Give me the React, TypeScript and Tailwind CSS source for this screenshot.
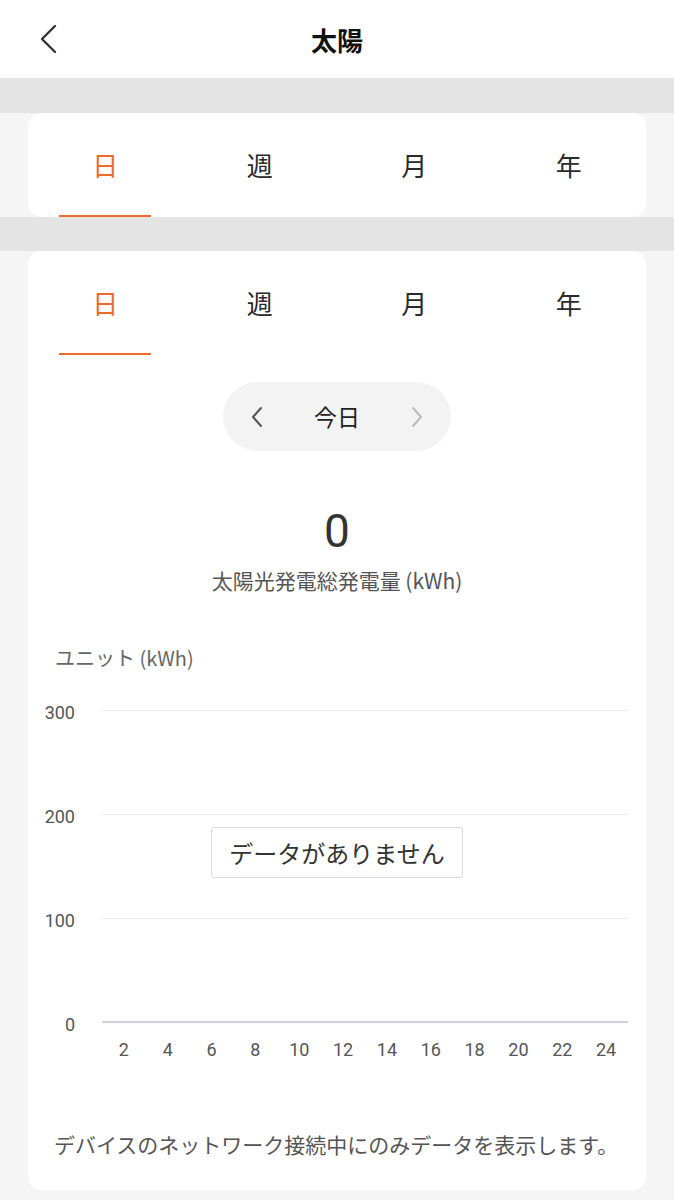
import { useState } from "react";

const tabs = ["日", "週", "月", "年"];
const yTicks = [300, 200, 100, 0];
const xTicks = [2, 4, 6, 8, 10, 12, 14, 16, 18, 20, 22, 24];

function Tabs({ active, onChange }: { active: number; onChange: (i: number) => void }) {
  return (
    <div className="grid grid-cols-4 h-[104px]">
      {tabs.map((t, i) => (
        <button
          key={t}
          onClick={() => onChange(i)}
          className="flex flex-col items-center justify-end"
        >
          <span
            className={`flex-1 flex items-center text-[26px] font-normal ${
              i === active ? "text-[#ec6a2c]" : "text-[#2a2a2a]"
            }`}
          >
            {t}
          </span>
          <span className={`h-[2px] w-[92px] ${i === active ? "bg-[#ec6a2c]" : "bg-transparent"}`} />
        </button>
      ))}
    </div>
  );
}

export default function App() {
  const [tabTop, setTabTop] = useState(0);
  const [tab, setTab] = useState(0);

  return (
    <div className="min-h-screen bg-[#f5f5f5] font-['Noto_Sans_CJK_JP','Noto_Sans',sans-serif] text-[#333]">
      {/* Header */}
      <div className="grid grid-cols-[1fr_auto_1fr] items-center h-[78px] bg-white">
        <button className="pl-[38px] justify-self-start">
          <svg width="22" height="30" viewBox="0 0 22 30" fill="none">
            <path d="M17 2 L4 15 L17 28" stroke="#333" strokeWidth="2.4" strokeLinecap="round" strokeLinejoin="round" />
          </svg>
        </button>
        <h1 className="text-[26px] font-bold text-[#111]">太陽</h1>
        <div />
      </div>

      <div className="h-[35px] bg-[#e4e4e4]" />

      <div className="mx-[28px] bg-white rounded-[14px]">
        <Tabs active={tabTop} onChange={setTabTop} />
      </div>

      <div className="h-[34px] bg-[#e4e4e4]" />

      {/* Main card */}
      <div className="mx-[28px] bg-white rounded-[14px] pb-[33px]">
        <Tabs active={tab} onChange={setTab} />

        <div className="flex justify-center mt-[27px]">
          <div className="flex items-center justify-between w-[228px] h-[69px] rounded-full bg-[#f3f3f3] px-[28px]">
            <svg width="12" height="22" viewBox="0 0 12 22" fill="none">
              <path d="M10 2 L2 11 L10 20" stroke="#555" strokeWidth="2" strokeLinecap="round" strokeLinejoin="round" />
            </svg>
            <span className="text-[23px] text-[#222]">今日</span>
            <svg width="12" height="22" viewBox="0 0 12 22" fill="none">
              <path d="M2 2 L10 11 L2 20" stroke="#bbb" strokeWidth="2" strokeLinecap="round" strokeLinejoin="round" />
            </svg>
          </div>
        </div>

        <div className="mt-[54px] text-center text-[46px] leading-[52px] font-normal text-[#333] font-['Roboto',sans-serif]">
          0
        </div>
        <div className="mt-[10px] text-center text-[21px] leading-[26px] text-[#555]">
          太陽光発電総発電量 (kWh)
        </div>

        <div className="mt-[52px] pl-[27px] text-[20px] leading-[26px] text-[#666]">ユニット (kWh)</div>

        {/* Chart */}
        <div className="relative mt-[27px] pr-[18px]">
          <div className="flex flex-col gap-[80px]">
            {yTicks.map((v) => (
              <div key={v} className="flex items-center h-[24px]">
                <span className="w-[47px] text-right text-[18px] text-[#555] font-['Roboto',sans-serif] translate-y-[2px]">{v}</span>
                <div className={`ml-[27px] flex-1 ${v === 0 ? "h-[2px] bg-[#ccd1e3]" : "h-[1px] bg-[#ebebeb]"}`} />
              </div>
            ))}
          </div>
          <div className="ml-[74px] mt-[2px] grid grid-cols-12">
            {xTicks.map((x) => (
              <span key={x} className="text-center text-[18px] text-[#555] font-['Roboto',sans-serif]">
                {x}
              </span>
            ))}
          </div>
          <div className="absolute left-1/2 -translate-x-1/2 top-[129px] w-[252px] h-[51px] flex items-center justify-center bg-white border border-[#d9d9d9] rounded-[3px] text-[24px] text-[#333] whitespace-nowrap">
            データがありません
          </div>
        </div>

        <p className="mt-[68px] pl-[26px] text-[21px] leading-[26px] text-[#555]">
          デバイスのネットワーク接続中にのみデータを表示します。
        </p>
      </div>
      <div className="h-[12px]" />
    </div>
  );
}
